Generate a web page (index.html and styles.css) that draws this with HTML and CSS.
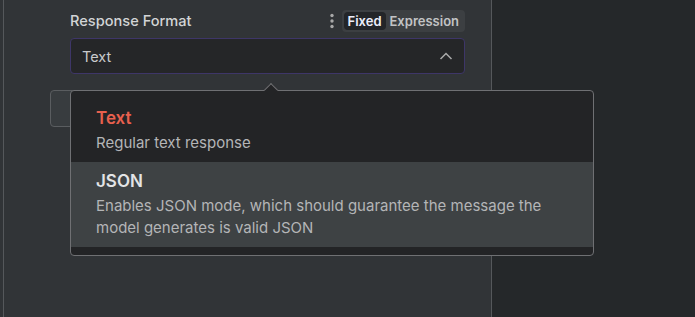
FILE: index.html
```html
<!DOCTYPE html>
<html>
<head>
<meta charset="utf-8">
<link rel="stylesheet" href="styles.css">
</head>
<body>
<div class="panel">
  <div class="inner">
    <div class="param">
      <div class="param-header">
        <span class="label">Response Format</span>
        <div class="header-actions">
          <svg class="dots" width="6" height="16" viewBox="0 0 6 16"><circle cx="3" cy="2.5" r="1.7"/><circle cx="3" cy="8" r="1.7"/><circle cx="3" cy="13.5" r="1.7"/></svg>
          <div class="toggle">
            <span class="toggle-opt active">Fixed</span>
            <span class="toggle-opt">Expression</span>
          </div>
        </div>
      </div>
      <div class="select-wrap">
        <div class="select">
          <span class="select-value">Text</span>
          <svg class="chevron" width="14" height="8" viewBox="0 0 14 8"><path d="M1.5 7 L7 1.5 L12.5 7" fill="none" stroke="#a9a9a9" stroke-width="1.5"/></svg>
        </div>
        <div class="popper">
          <div class="arrow"></div>
          <ul class="options">
            <li class="option">
              <div class="opt-title selected">Text</div>
              <div class="opt-desc">Regular text response</div>
            </li>
            <li class="option hover">
              <div class="opt-title">JSON</div>
              <div class="opt-desc">Enables JSON mode, which should guarantee the message the model generates is valid JSON</div>
            </li>
          </ul>
        </div>
      </div>
      <div class="add-btn"></div>
    </div>
  </div>
</div>
<div class="right-area"></div>
</body>
</html>
```

FILE: styles.css
```css
* { box-sizing: border-box; }
html, body { margin: 0; padding: 0; }
body {
  width: 695px;
  height: 317px;
  display: flex;
  background: #25282a;
  font-family: Inter, "Noto Sans", sans-serif;
  overflow: hidden;
}
.panel {
  width: 492px;
  height: 317px;
  background: #313437;
  border-right: 1px solid #55585b;
  padding-left: 3px;
  flex-shrink: 0;
}
.inner {
  height: 100%;
  border-left: 1px solid #55585b;
  padding: 10px 0 0 66px;
}
.param { width: 395px; }
.param-header {
  display: flex;
  align-items: center;
  justify-content: space-between;
  height: 22px;
}
.label {
  color: #d3d4d6;
  font-size: 14.6px;
  font-weight: 500;
}
.header-actions {
  display: flex;
  align-items: center;
  gap: 7px;
}
.dots { fill: #a8a8a8; }
.toggle {
  display: flex;
  align-items: center;
  background: #3c3f42;
  border-radius: 4px;
  padding: 2px;
  height: 22px;
}
.toggle-opt {
  font-size: 13px;
  font-weight: 600;
  color: #c2c3c5;
  padding: 0 4px;
  height: 18px;
  line-height: 18px;
  border-radius: 4px;
}
.toggle-opt.active {
  background: #232528;
  color: #eceefa;
}
.select-wrap {
  position: relative;
  margin-top: 6px;
}
.select {
  height: 36px;
  background: #252628;
  border: 1px solid #3e3668;
  border-radius: 4px;
  display: flex;
  align-items: center;
  justify-content: space-between;
  padding: 0 11px 0 11px;
}
.select-value {
  color: #c9cacc;
  font-size: 14.5px;
}
.chevron { display: block; }
.popper {
  position: absolute;
  left: 0;
  top: 52px;
  width: 524px;
  background: #232426;
  border: 1px solid #6f7073;
  border-radius: 4px;
  z-index: 2;
}
.arrow {
  position: absolute;
  left: 195px;
  top: -6px;
  width: 10px;
  height: 10px;
  background: #232426;
  border-top: 1px solid #6f7073;
  border-left: 1px solid #6f7073;
  transform: rotate(45deg);
}
.options {
  list-style: none;
  margin: 0;
  padding: 8px 0;
  position: relative;
}
.option {
  padding: 6px 25px 8px 25px;
}
.option.hover { background: #3e4244; }
.opt-title {
  font-size: 17px;
  font-weight: 600;
  line-height: 26px;
  color: #e3e4e6;
  margin-bottom: 1px;
}
.opt-title.selected { color: #e8604e; }
.opt-desc {
  font-size: 15px;
  line-height: 22px;
  color: #b4b5b7;
}
.add-btn {
  margin: 16px 0 0 -20px;
  width: 200px;
  height: 37px;
  background: #383c3f;
  border: 1px solid #5a5d60;
  border-radius: 4px;
}
.right-area { flex: 1; }
```
